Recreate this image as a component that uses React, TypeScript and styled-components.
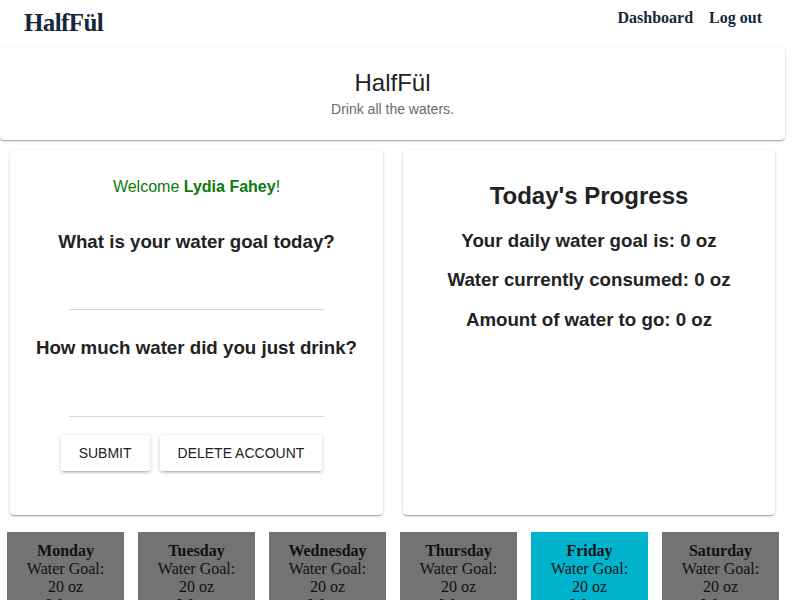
import React from 'react';
import styled, { createGlobalStyle } from 'styled-components';

const GlobalStyle = createGlobalStyle`
  html, body {
    margin: 0;
    padding: 0;
    background: #fff;
  }
  body {
    font-family: "Liberation Sans", Arial, sans-serif;
    color: #222;
  }
  * { box-sizing: border-box; }
`;

// page is drawn 785 wide: the browser's scrollbar takes the rest
const Page = styled.div`
  width: 785px;
`;

const Nav = styled.nav`
  display: flex;
  justify-content: space-between;
  align-items: flex-start;
  height: 47px;
  padding: 0 23px 0 24px;
  font-family: "Liberation Serif", "Times New Roman", serif;
  color: #14283c;
`;

const Brand = styled.div`
  font-size: 25px;
  font-weight: bold;
  line-height: 28px;
  margin-top: 9px;
  letter-spacing: -0.6px;
`;

const NavLinks = styled.div`
  display: flex;
  gap: 16px;
  margin-top: 9px;
`;

const NavLink = styled.a`
  font-size: 16px;
  font-weight: bold;
  line-height: 18px;
  color: inherit;
  text-decoration: none;
`;

const Paper = styled.div`
  background: #fff;
  border-radius: 4px;
  box-shadow: 0 1px 3px rgba(0, 0, 0, 0.2), 0 1px 1px rgba(0, 0, 0, 0.14),
    0 2px 1px -1px rgba(0, 0, 0, 0.12);
`;

const Header = styled(Paper)`
  height: 93px;
  text-align: center;
  padding-top: 22px;
`;

const Title = styled.h1`
  margin: 0;
  font-size: 24px;
  font-weight: normal;
  line-height: 27px;
  color: #222;
`;

const Subtitle = styled.p`
  margin: 5px 0 0;
  font-size: 14px;
  line-height: 16px;
  color: #6b6b6b;
`;

const Columns = styled.div`
  display: grid;
  grid-template-columns: 373px 372px;
  gap: 20px;
  padding: 10px 10px 0;
`;

const Card = styled(Paper)`
  height: 365px;
  display: flex;
  flex-direction: column;
  align-items: center;
  text-align: center;
`;

const Welcome = styled.p`
  margin: 28px 0 0;
  font-size: 16px;
  line-height: 18px;
  color: #0a7a0a;
`;

const Question = styled.h3<{ $top: number }>`
  margin: ${(p) => p.$top}px 0 0;
  font-size: 18.72px;
  font-weight: bold;
  line-height: 22px;
  color: #222;
`;

const Field = styled.input<{ $top: number }>`
  display: block;
  width: 255px;
  height: 32px;
  margin-top: ${(p) => p.$top}px;
  border: none;
  border-bottom: 1px solid #d6d6d6;
  outline: none;
  background: transparent;
  font-size: 16px;
`;

const Buttons = styled.div`
  display: flex;
  gap: 10px;
  margin-top: 18px;
  margin-left: -10px;
`;

const Button = styled.button`
  height: 36px;
  padding: 0 18px;
  border: none;
  border-radius: 2px;
  background: #fff;
  font-family: "Liberation Sans", Arial, sans-serif;
  font-size: 14px;
  color: #222;
  text-transform: uppercase;
  box-shadow: 0 1px 5px rgba(0, 0, 0, 0.16), 0 2px 2px rgba(0, 0, 0, 0.1),
    0 3px 1px -2px rgba(0, 0, 0, 0.08);
  cursor: pointer;
`;

const ProgressTitle = styled.h2`
  margin: 32px 0 0;
  font-size: 24px;
  font-weight: bold;
  line-height: 28px;
  color: #222;
`;

const Stat = styled.p<{ $top: number }>`
  margin: ${(p) => p.$top}px 0 0;
  font-size: 18.72px;
  font-weight: bold;
  line-height: 22px;
  color: #222;
`;

const Days = styled.div`
  display: flex;
  flex-wrap: wrap;
  gap: 14px;
  padding: 17px 0 20px 7px;
`;

const Day = styled.div<{ $today?: boolean }>`
  width: 117px;
  padding: 10px 4px 10px;
  background: ${(p) => (p.$today ? '#00b4cd' : '#737373')};
  font-family: "Liberation Serif", "Times New Roman", serif;
  font-size: 16px;
  line-height: 18px;
  color: #111;
  text-align: center;
`;

const DayName = styled.div`
  font-weight: bold;
`;

const days = ['Monday', 'Tuesday', 'Wednesday', 'Thursday', 'Friday', 'Saturday', 'Sunday'];

export default function App() {
  return (
    <Page>
      <GlobalStyle />
      <Nav>
        <Brand>HalfFül</Brand>
        <NavLinks>
          <NavLink href="#">Dashboard</NavLink>
          <NavLink href="#">Log out</NavLink>
        </NavLinks>
      </Nav>
      <Header>
        <Title>HalfFül</Title>
        <Subtitle>Drink all the waters.</Subtitle>
      </Header>
      <Columns>
        <Card>
          <Welcome>
            Welcome <b>Lydia Fahey</b>!
          </Welcome>
          <Question $top={35}>What is your water goal today?</Question>
          <Field $top={25} />
          <Question $top={27}>How much water did you just drink?</Question>
          <Field $top={26} />
          <Buttons>
            <Button>Submit</Button>
            <Button>Delete Account</Button>
          </Buttons>
        </Card>
        <Card>
          <ProgressTitle>Today's Progress</ProgressTitle>
          <Stat $top={20}>Your daily water goal is: 0 oz</Stat>
          <Stat $top={17}>Water currently consumed: 0 oz</Stat>
          <Stat $top={18}>Amount of water to go: 0 oz</Stat>
        </Card>
      </Columns>
      <Days>
        {days.map((d) => (
          <Day key={d} $today={d === 'Friday'}>
            <DayName>{d}</DayName>
            <div>Water Goal:</div>
            <div>20 oz</div>
            <div>Water Consumed:</div>
            <div>0 oz</div>
          </Day>
        ))}
      </Days>
    </Page>
  );
}
